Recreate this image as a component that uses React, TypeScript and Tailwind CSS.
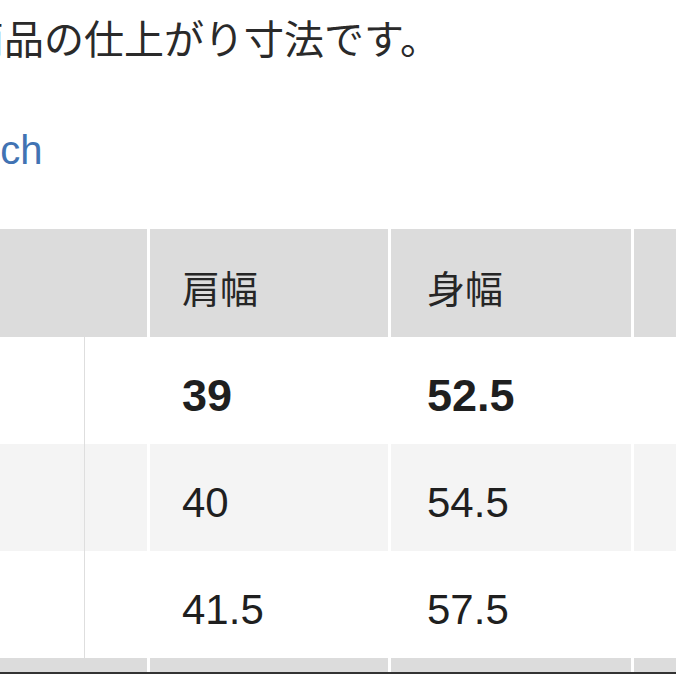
import React from 'react';

const rows = [
  { shoulder: '39', chest: '52.5', bold: true, bg: 'bg-white' },
  { shoulder: '40', chest: '54.5', bold: false, bg: 'bg-[#f4f4f4]' },
  { shoulder: '41.5', chest: '57.5', bold: false, bg: 'bg-white' },
];

const grid = 'grid grid-cols-[85px_65px_241px_243px_1fr]';

export default function App() {
  return (
    <div className="w-[676px] h-[676px] overflow-hidden bg-white font-['Liberation_Sans','Noto_Sans_CJK_JP',sans-serif]">
      <p className="ml-[-36px] pt-[15px] whitespace-nowrap text-[40px] leading-[44px] text-[#2a2a2a] font-['Noto_Sans_CJK_JP',sans-serif]">
        商品の仕上がり寸法です。
      </p>

      {/* Unit link */}
      <div className="mt-[66px] ml-[-31px] h-[56px]">
        <a className="text-[40px] leading-[50px] text-[#4173b3] whitespace-nowrap">inch</a>
      </div>

      {/* Size table */}
      <div className="mt-[48px] w-[700px]">
        <div className={`${grid} h-[108px] bg-[#dcdcdc] text-[38px] text-[#262626] font-['Noto_Sans_CJK_JP',sans-serif]`}>
          <div className="col-span-2 border-r-[3px] border-white"></div>
          <div className="flex items-center pl-8 pt-[6px] border-r-[3px] border-white">肩幅</div>
          <div className="flex items-center pl-9 pt-[6px] border-r-[3px] border-white">身幅</div>
          <div></div>
        </div>

        {rows.map((row, i) => (
          <div key={i} className={`${grid} h-[107px] ${row.bg} text-[#1f1f1f]`}>
            <div className="border-r border-[#dedede]"></div>
            <div className="border-r-[3px] border-white"></div>
            <div className={`flex items-center pl-8 pt-[10px] border-r-[3px] border-white ${row.bold ? 'font-bold text-[45px]' : 'text-[42px]'}`}>
              {row.shoulder}
            </div>
            <div className={`flex items-center pl-9 pt-[10px] border-r-[3px] border-white ${row.bold ? 'font-bold text-[45px]' : 'text-[42px]'}`}>
              {row.chest}
            </div>
            <div></div>
          </div>
        ))}

        {/* Next header band, mostly off screen */}
        <div className={`${grid} h-[14px] bg-[#dcdcdc]`}>
          <div className="col-span-2 border-r-[3px] border-white"></div>
          <div className="border-r-[3px] border-white"></div>
          <div className="border-r-[3px] border-white"></div>
          <div></div>
        </div>
        <div className="h-[2px] bg-[#333]"></div>
      </div>
    </div>
  );
}
